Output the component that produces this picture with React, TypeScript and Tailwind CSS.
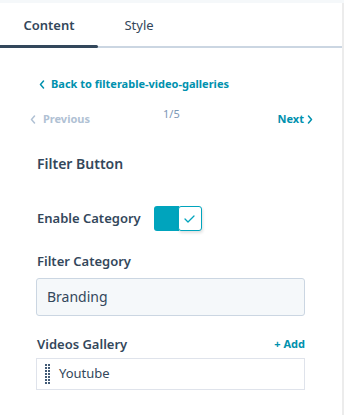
import React from 'react';

const font = { fontFamily: '"Noto Sans", "Open Sans", sans-serif' };

const Chevron: React.FC<{ dir: 'left' | 'right'; className?: string }> = ({ dir, className }) => (
  <svg width="6" height="9" viewBox="0 0 6 9" className={className} fill="none">
    <path
      d={dir === 'left' ? 'M4.5 1L1.5 4.5L4.5 8' : 'M1.5 1L4.5 4.5L1.5 8'}
      stroke="currentColor"
      strokeWidth="1.5"
      strokeLinecap="round"
      strokeLinejoin="round"
    />
  </svg>
);

const DragHandle: React.FC = () => (
  <div className="grid grid-cols-2 gap-x-[1px] gap-y-[1px]">
    {Array.from({ length: 14 }).map((_, i) => (
      <span key={i} className="block w-[2px] h-[2px] bg-[#425b76]" />
    ))}
  </div>
);

const App: React.FC = () => {
  return (
    <div className="w-[344px] h-[415px] bg-white flex flex-col overflow-hidden" style={font}>
      <div className="h-[3px] bg-[#f5f8fa] shrink-0" />
      <div className="flex flex-1">
        <div className="flex-1 flex flex-col">
          {/* tabs */}
          <div className="relative flex h-[45px] pt-[3px] border-b-2 border-[#cbd6e2]">
            <div className="w-[98px] flex items-center justify-center text-[13px] font-semibold text-[#33475b]">
              Content
            </div>
            <div className="w-[80px] flex items-center justify-center text-[13px] text-[#33475b] ml-[1px]">
              Style
            </div>
            <div className="absolute left-0 -bottom-[2px] w-[98px] h-[3px] rounded-r-full rounded-l-sm bg-[#33475b]" />
          </div>

          {/* back link */}
          <div className="mt-[28px] pl-[39px] flex items-center gap-[6px] text-[#0091ae] text-[11px] font-bold h-[16px]">
            <Chevron dir="left" />
            <span>Back to filterable-video-galleries</span>
          </div>

          {/* pager */}
          <div className="mt-[14px] pl-[30px] pr-[29px] flex items-start h-[22px]">
            <div className="w-[133px] flex items-center gap-[7px] text-[#b0c1d4] text-[11px] font-bold mt-[5px]">
              <Chevron dir="left" />
              <span>Previous</span>
            </div>
            <div className="text-[11px] text-[#7c98b6]">1/5</div>
            <div className="ml-auto flex items-center gap-[3px] text-[#0091ae] text-[11px] font-bold mt-[5px]">
              <span>Next</span>
              <Chevron dir="right" />
            </div>
          </div>

          <div className="pl-[37px] pr-[37px] flex flex-col">
            <div className="mt-[25px] text-[14px] font-semibold text-[#33475b]">Filter Button</div>

            <div className="mt-[32px] flex items-center gap-[13px]">
              <span className="text-[13px] font-semibold text-[#33475b]">Enable Category</span>
              <div className="flex h-[25px]">
                <div className="w-[25px] bg-[#00a4bd] rounded-l-[3px]" />
                <div className="w-[24px] -ml-[1px] bg-white border border-[#00a4bd] rounded-[3px] flex items-center justify-center shadow-[1px_2px_3px_rgba(0,0,0,0.12)]">
                  <svg width="11" height="8" viewBox="0 0 11 8" fill="none">
                    <path d="M1 4L4 7L10 1" stroke="#00a4bd" strokeWidth="1.3" strokeLinecap="round" strokeLinejoin="round" />
                  </svg>
                </div>
              </div>
            </div>

            <div className="mt-[21px] text-[13px] font-semibold text-[#33475b]">Filter Category</div>
            <div className="mt-[6px] h-[38px] w-[269px] -ml-[1px] bg-[#f5f8fa] border border-[#cbd6e2] rounded-[3px] flex items-center px-[10px] text-[14px] text-[#33475b]">
              Branding
            </div>

            <div className="mt-[19px] flex items-center justify-between w-[268px]">
              <span className="text-[13px] font-semibold text-[#33475b]">Videos Gallery</span>
              <span className="text-[11px] font-bold text-[#0091ae]">+ Add</span>
            </div>
            <div className="mt-[4px] h-[32px] w-[269px] -ml-[1px] bg-white border border-[#dfe3eb] flex items-center pl-[8px] gap-[9px] text-[13px] text-[#33475b]">
              <DragHandle />
              <span>Youtube</span>
            </div>
          </div>
        </div>
        <div className="w-[2px] bg-[#ececec]" />
      </div>
    </div>
  );
};

export default App;
